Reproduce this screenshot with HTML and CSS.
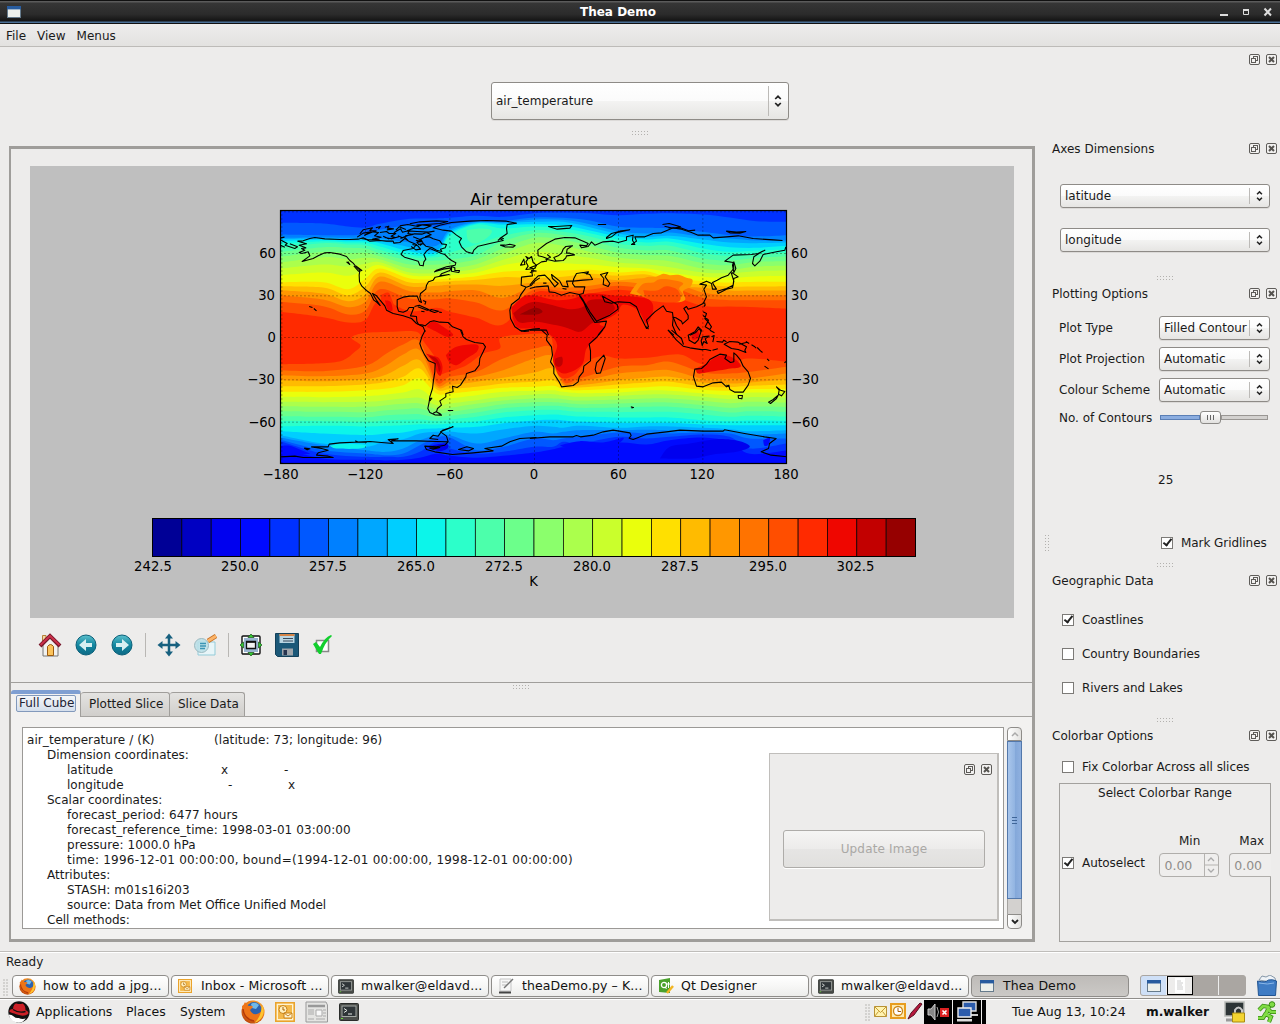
FILE: index.html
```html
<!DOCTYPE html>
<html lang="en">
<head>
<meta charset="utf-8">
<title>Thea Demo</title>
<link rel="stylesheet" href="styles.css">
</head>
<body>
<svg class="defs" width="0" height="0">
  <defs>
    <linearGradient id="teal" x1="0" y1="0" x2="0" y2="1"><stop offset="0" stop-color="#5cc0cc"/><stop offset=".5" stop-color="#1287a0"/><stop offset="1" stop-color="#0e6a86"/></linearGradient>
    <radialGradient id="fox" cx=".6" cy=".35" r=".7"><stop offset="0" stop-color="#ffd24a"/><stop offset=".6" stop-color="#ee7d18"/><stop offset="1" stop-color="#b8420c"/></radialGradient>
    <symbol id="float" viewBox="0 0 11 11"><rect x=".5" y=".5" width="10" height="10" rx="1.5" fill="#f2f1f0" stroke="#5e5c59"/><rect x="4.5" y="2.5" width="4" height="4" fill="none" stroke="#5e5c59"/><rect x="2.5" y="4.5" width="4" height="4" fill="#f2f1f0" stroke="#5e5c59"/></symbol>
    <symbol id="close" viewBox="0 0 11 11"><rect x=".5" y=".5" width="10" height="10" rx="1.5" fill="#f2f1f0" stroke="#5e5c59"/><path d="M3 3l5 5M8 3l-5 5" stroke="#55534f" stroke-width="2"/></symbol>
    <symbol id="updown" viewBox="0 0 8 12"><path d="M1.2 4L4 1.3 6.8 4M1.2 8L4 10.7 6.8 8" fill="none" stroke="#222" stroke-width="1.7"/></symbol>
    <symbol id="firefox" viewBox="0 0 24 24"><circle cx="12" cy="12" r="11.5" fill="url(#fox)"/><circle cx="13" cy="9.5" r="7.5" fill="#2d62ae"/><path d="M10 4q4-3 8 1l-3 4-4-1z" fill="#70b9e8"/><path d="M1 6q2-1 3-4 1 3 4 4 3-1 4 1l-3 3q2 5 7 4 4-1 5-5 3 5-2 10-8 5-14-1-4-5-4-12z" fill="#ee7417"/><path d="M21 5q3 5 1 10-2 6-9 8 7-5 8-18z" fill="#ffc52f"/><path d="M2 9q1 10 11 12" stroke="#b43a0a" stroke-width="1.5" fill="none"/></symbol>
    <symbol id="outlook" viewBox="0 0 20 20"><rect x=".8" y=".8" width="18.4" height="18.4" fill="#fff3cf" stroke="#eaa32c" stroke-width="1.6"/><rect x="3" y="3" width="14" height="14" fill="#f4b94a"/><circle cx="8" cy="7.5" r="4" fill="#fff0bd" stroke="#c98218"/><path d="M8 5v3h2" stroke="#a86108" fill="none"/><path d="M9 11h8v5H9z" fill="#fff5d3" stroke="#c98218"/><path d="M9 11l4 3 4-3" fill="none" stroke="#c98218"/></symbol>
    <symbol id="term" viewBox="0 0 20 18"><rect x=".5" y=".5" width="19" height="17" rx="1" fill="#4b4e4b" stroke="#2a2c2a"/><rect x="3" y="3" width="14" height="10.5" fill="#2f3538" stroke="#a3a8a4"/><path d="M5 5.5l3 2-3 2M9 11h4" stroke="#e6eae6" fill="none"/><path d="M2 15.5h2" stroke="#6edb3a"/></symbol>
    <symbol id="win" viewBox="0 0 14 12"><rect x=".5" y=".5" width="13" height="11" fill="#edf0ec" stroke="#667b8c"/><path d="M0 0h14v3.4H0z" fill="#285c9f"/></symbol>
  </defs>
</svg>

<header class="titlebar">
  <svg width="14" height="12"><use href="#win"/></svg>
  <span class="title">Thea Demo</span>
  <svg class="winbtns" width="52" height="12" viewBox="0 0 52 12"><path d="M0 9h8" stroke="#ddd" stroke-width="2"/><path d="M23.500 4.500h5v4h-5z" fill="none" stroke="#ddd"/><path d="M23 4h6" stroke="#ddd" stroke-width="2"/><path d="M44.500 2.500l6.500 7M51 2.500l-6.500 7" stroke="#ddd" stroke-width="2"/></svg>
</header>
<nav class="menubar"><span>File</span><span>View</span><span>Menus</span></nav>

<section class="topdock">
  <div class="dockbtns"><svg><use href="#float"/></svg><svg><use href="#close"/></svg></div>
  <div class="combo big"><span>air_temperature</span><svg class="ud"><use href="#updown"/></svg></div>
  <i class="grip"></i>
</section>

<main class="work">
  <section class="central">
    <div class="plotpane">
      <svg class="figure" width="984" height="452" viewBox="30 166 984 452">
        <rect x="30" y="166" width="984" height="452" fill="#bfbfbf"/>
        <text x="534" y="205" class="ptitle">Air temperature</text>
        <svg x="280.500" y="210.500" width="506" height="253" viewBox="32 76 1518 759">
          <g id="bands"></g>
          <g class="coast">
            <g>
              <path d="M32 180l13 6M32 158l12-2M34 165l18 10-6 5 29 10 8-5-23-9"/>
              <path d="M96 205l-8-3 17-7-10-5 13-2-20-8 22-4-26-8 16-1 20-7 15-3 30 4 45 2 30 0 25-1 15-4 20 10 30-2 20 2 20 0 2 6 18-2 15-12 15 10 20 8-10 12-30 6-6 12 10 8 21 6 20 6 5 12 10 2 2-12 6-8-6-14 8-10 10-8 20 8 15 7 10 3 10 10 10 8 13 7-2 7-26 5-30 10-6 5 26-8 25-4-5 8-25 10-5 6 28-4-42 8-6 9-14 5-6 10-2 12-16 13-2 10 5 17-7-4-6-15-22 0-20 3-18 8 0 21 4 13 14 3 12-5 6-9 14 0-7 18-3 7 18 2 1 14 5 10 14 2 6 2 14-12 12-3 18 4 25 1 13 13 27 10 5 15"/>
              <path d="M96 205l19-5 5 12-23 17 33-9 15-8 10-5 10-4 15-1 30 5 20 7 10 12 10 8 8 10 12 11-2 15 1 20 7 13 14 13 12 9 10 20 10 7 9 9-11-16-12-20 12 7 15 18 10 12 5 13 20 10 30 7 25 8 15 15 20 10 6 15"/>
              <path d="M230 230l10 8-6-9M252 242l14 16 10-2-18-14M118 364l10 3M132 370l8 7"/>
              <path d="M262 156l18-12 24-4-20 10 26-10 16 2-12 10 20 4-26 6 20 2-34-1-20-3M270 146l10-12 28-6-8 8 20 1M318 128l14-4-6 7M345 126l12-3-4 6 18 2-20 3M330 142l20-3 8 6 20 0-14 8 12 4-20 4-16-8M345 157l20 4 22-6M372 143l20-12 6 10 22-6-6 10 16 3-24 4M384 152l14 6 18-8M378 135l10-10 20 8M390 122l24-4 30 6 14-5 26 3-22 9-30-2-20 8 30 2 34 2 18-3M420 116l30-6 50-3 34 2-24 6-40 3-30 2M416 150l18-4 22 1 14-5 14 7-18 6M430 155l20 8 12-5 16-3 12 6 20 6 6 9 14 2-4 10-14 4 4 7-16-4-14-8-18-4-8-8-14 3-4-7 14-2-18-4M424 184l14 10 14-2-8-10-16-4M440 172l14-8 6 10-10 7M392 160l12-5 9 10"/>
              <path d="M490 128l20-8 35-8 55-4 50-2 60 2 30 6-28 4-2 12 2 15-22 15 10 6-40 9-35 8-13 12-4 10-18-5-15-15-7-15 7-10-15-10-15-12-25-3zM684 166l10-8 8 3M692 180l13 5 25 1 6-5-16-4-14 3z"/>
              <path d="M768 214l10 6 7-6 5 18 10 8-5 10-27 3 7-10-7-13 6-8zM752 240l10-18 3 16zM800 258l-15-2 3 16-33 4-1 24 16 6 15-6 10-12 15-10M768 306l-3 6-13 18-4 10-23 18-5 17 2 25 13 25 20 13 35-6 20-2"/>
              <path d="M434 364l14-4 30 14-6 1-28-10M480 377l4-4 22 5-12 4zM454 378l10 2M508 381l8 1M460 346l8 4-3 8M545 244l10 4 0 8 14 0-2 6-22-4z"/>
            </g>
            <g transform="translate(780 0)">
              <path d="M0 262l10-2 0-10-10-2 20-8 15-10 15-2 2-8-14-5-13-3-1-17 26-20 25-13 30-5 30 1 25 10 15 7-5 7-20-2 5 8 20-4 10-14 10 10 25-10 30-2 15 4 25-7 0-10 20-5-2 15 7 13-10 0 15-10-5-13 30 0 25-10 25-2 25-11 10-4 25 4 30 10 20 8 35 0 10 8 40-3 35-3 45 8 60 4 28 2"/>
              <path d="M230 157l15-12 25-7 30-4-40 9-15 12-15 5zM56 124l22 0 48-3-6 8-38 3zM204 118l25 0M398 118l20-3 34 10-22 4-26-6M416 128l40 1 20 8 20-2M590 138l30 3 28-2-18 5-30-1zM52 208l10 8-14 6 18 4 9 2 25-2 8-8 2-6 24-3-14-5-10 0 2-12 16-10-20 2-8 8-5 12-10 8-13 5 6 10"/>
              <path d="M768 185l-3 10-25 5-40 8-10 20-15 14-7-7 4-20 23-15 10-5-20 10-20 3-55 2-25 18 25 4 2 18-17 20-20 8-13 7-14 7 4 8 8 12-12 0-3-17-15-7-20 9 20 3-8 12 8 23-10 20-20 10-25 7-5-8-8 6 13 21 0 10-17 15-3-8-17-10-8-2 10 25 10 15"/>
              <path d="M612 230l6 20-6 12-4-22zM606 262l19 13-13 5-2 20-20 10-28 8 3 7 25-13 18-4 4-20-8-26M524 352l2 8-4 4"/>
              <path d="M216 332l14 8 15 8 17 10 3 14-25 18-40 18-20-28-20-35-12-17M148 330l14 22 10 23 13 22 10 15 35-4-5 17-20 25M218 334l7 16 20 4 20-4 35 2 20 13 10 25 20 40 6-5-6-20 25-25 25-18 10 16 18 4 2 18-2 20 12 28M350 424l6 8"/>
              <path d="M0 310l20-5 35-3 3 18 17 2 20 8 25-8 28 6 12-3 5-20-30 0-7-10 2-7 30-3 28-2-8-15-20-6-20 3-8 15-2 8-20 0 5 17-17-2-8-15-25-20 3 12 17 15-10 10-15-20-15-15-20 2-15 16-10 12M162 262l14-2-6 8M212 268l22-6-8 13 14 20-5 9-15-6 2-18zM0 435l14-1 36 1 6 15M40 294l10 0M98 310l12 2"/>
              <path d="M520 380l10 5-5 15 10 10 10 15-5 8-14-8 10-20-16-14M414 434l18 16M480 450l18-8 10-12 6 10"/>
            </g>
            <g transform="translate(0 435)">
              <path d="M466 0l-10 20-6 20 5 15 10 20 11 17 20 8-1 25-4 25-3 25-8 25-2 15-4 20 6 12 15 7 20 1-4-4-12-6-9 4M572 0l8 20 10 8 25 9 25 3 7 10-7 15-10 20-2 20-13 17-25 8-2 10-16 25-10 7-14-4 2 17-22 5 0 10-18 12 5 13-12 10-3 10 15 10M534 241l16 0M478 206l8-2-6 8M750 0l14 4 14-2"/>
              <path d="M32 380l43-2 25 4 90 0-15-4-35-3 5-7 30-8-20-5-30-5 50 0 3-8 32-4 90-4 70 6-15-12 30-2-20 6 75 0 60 2 35 1-5-17-18-13 38-15-32 10-13 18-15-3-10 10 25 3M104 354l16 2-8 3zM256 332l10 4 25 0M535 335l-10 10-25 5-35-2 5 10 25 7 53 8 62-5 60-6-25-7 50-7 25-13 30-10 50-3M480 354l30-2-20 5zM566 358l25-8 20 5-14 7z"/>
            </g>
            <g transform="translate(780 435)">
              <path d="M218 0l-18 22-22 20 4 20 0 30-20 16-2 17-12 15-3 15-15 11-35 4-7-15-16-25 0-20-10-15 6-20-3-25-15-20 2-15-17-15M222 75l4 10-14 43-12 2-4-12 4-20z"/>
              <path d="M515 115l-20 2-4 23 9 28 20 2 30-12 25-2 15 14 7-5 3 13 15 8 25 0 15-21 7-20-7-20-15-17-8-18-12-15-8-7 0 27-10 2-17-12 5-10-20-3-15 8-15 8-10 14zM625 196l13 0-2 10-10-2zM740 170l12 10 13 4-10 13-9-5 2-12zM745 195l-5 10-18 15-6-4 14-8zM590 164l6 6"/>
              <path d="M583 42l17-8 25 2 25 14-5 10 3 7-23-9-20-3zM628 42l24-6M648 34l10 6M665 44l10 6 4 4M682 52l10 10 6 5M712 86l6 6M704 108l12 8M764 98l4-4M415 0l25 30 20 18 20 5 40 6M425 0l30 25 6 18M475 15l20-10 10-15 10 10-10 30-10 10-17-10zM518 20l20-2-12 8 6 14-10-6-5 12-3-14zM508 58l20 0 16 4M548 60l16-4M545 20l8-4-4 20M560 34l18 2 4-6 8 5M540 0l14 8M303 230l8 2-6 1"/>
              <path d="M0 325l60-5 70 0 10-4 12 4 38-5 30-10 30-5 50 8 4 8-6 8 12 4 40-16 60-7 40-5 70 3 60 0 4-4 60 11 60 10 35 5-20 15-3 15-22 10 30 10 48 5"/>
            </g>
          </g>
          <path class="grid" d="M287 835V76M540 835V76M794 835V76M1046 835V76M1299 835V76M32 205H1549M32 332H1549M32 457H1549M32 584H1549M32 711H1549M32 80H1549M36 76V835"/>
        </svg>
        <rect x="280.500" y="210.500" width="506" height="253" fill="none" stroke="#000" stroke-width="1.200"/>
        <g class="tick end"><text x="276" y="258">60</text><text x="275" y="300">30</text><text x="276" y="342">0</text><text x="275" y="384">−30</text><text x="276" y="427">−60</text></g>
        <g class="tick start"><text x="791" y="258">60</text><text x="791" y="300">30</text><text x="791" y="342">0</text><text x="791" y="384">−30</text><text x="791" y="427">−60</text></g>
        <g class="tick"><text x="280.500" y="479">−180</text><text x="365" y="479">−120</text><text x="449.500" y="479">−60</text><text x="534" y="479">0</text><text x="618.500" y="479">60</text><text x="702" y="479">120</text><text x="786" y="479">180</text></g>
        <g id="colorbar"></g>
        <g class="tick"><text x="153" y="571">242.5</text><text x="240" y="571">250.0</text><text x="328" y="571">257.5</text><text x="416" y="571">265.0</text><text x="504" y="571">272.5</text><text x="592" y="571">280.0</text><text x="680" y="571">287.5</text><text x="768" y="571">295.0</text><text x="855.500" y="571">302.5</text><text x="533.500" y="586">K</text></g>
      </svg>
      <div class="tools">
        <svg width="24" height="24" viewBox="0 0 24 24"><path d="M5 12v11h15V12l-8-8z" fill="#f1f1ef" stroke="#777"/><path d="M4.500 8V2.500H8V6" fill="#f3d6a0" stroke="#b5803a"/><path d="M9.500 22.500v-9q3-4 6 0v9z" fill="#fbc35b" stroke="#9b5b11"/><path d="M2 13L12 3l10 10" fill="none" stroke="#751528" stroke-width="4"/><path d="M2.500 12L12 3l9.500 9" fill="none" stroke="#c9304a" stroke-width="2"/></svg>
        <svg width="24" height="24" viewBox="0 0 24 24"><circle cx="12" cy="12" r="10" fill="url(#teal)" stroke="#0b6079"/><path d="M5 12l7-6v4h6v4h-6v4z" fill="#d7f0f2"/></svg>
        <svg width="24" height="24" viewBox="0 0 24 24"><circle cx="12" cy="12" r="10" fill="url(#teal)" stroke="#0b6079"/><path d="M19 12l-7-6v4H6v4h6v4z" fill="#d7f0f2"/></svg>
        <i class="sep"></i>
        <svg width="24" height="24" viewBox="0 0 24 24"><path d="M12 4v16M4 12h16" stroke="#17607f" stroke-width="2.500"/><path d="M12 .5l4 5H8zM12 23.500l4-5H8zM.5 12l5-4v8zM23.500 12l-5-4v8z" fill="#17607f"/></svg>
        <svg width="24" height="24" viewBox="0 0 24 24"><path d="M5 9h17v13H5z" fill="#e8f5f8" stroke="#93cbd9"/><circle cx="8.500" cy="12.500" r="7" fill="#b8dfe7" fill-opacity=".85" stroke="#9cb9c0"/><path d="M7 10.500h6M7 13h6M7 15.500h5" stroke="#3b95b5" stroke-width="1.300"/><path d="M15 8l8-5" stroke="#c56e20" stroke-width="4.500"/><path d="M15 8l8-5" stroke="#fbb469" stroke-width="3"/></svg>
        <i class="sep"></i>
        <svg width="24" height="24" viewBox="0 0 24 24"><rect x="3" y="3" width="18" height="18" rx="1" fill="#fff" stroke="#111" stroke-width="1.400"/><path d="M5 5h14v14H5z" fill="#9ab5d1"/><path d="M7.500 8.500h9v7h-9z" fill="#f2f2f2" stroke="#111" stroke-width="1.300"/><path d="M8 9h8" stroke="#111" stroke-width="1.600"/><path d="M12 1l3 3.500H9zM12 23l3-3.500H9zM1 12l3.500-3v6zM23 12l-3.500-3v6z" fill="#36cf36" stroke="#174d17" stroke-width=".7"/></svg>
        <svg width="24" height="24" viewBox="0 0 24 24"><path d="M.5.500h23v23H2.500l-2-2z" fill="#1b5878" stroke="#134059"/><path d="M4.500 1h15v9h-15z" fill="#b9d5e2"/><path d="M4.500 1h15v2h-15z" fill="#d58447"/><path d="M8 5.500h10M8 8h10" stroke="#39495a"/><path d="M7 15.500h11v7H7z" fill="#9fa5ab"/><path d="M8.500 17h3.500v5H8.500z" fill="#26334e"/></svg>
        <svg width="24" height="24" viewBox="0 0 24 24"><path d="M5.500 7.500h12v11h-12z" fill="#fff" stroke="#888" stroke-width="1.500"/><path d="M2 11l3-2 4 5Q14 4 20 2l1 1Q14 9 10 21H8z" fill="#12cf2e"/></svg>
      </div>
    </div>
    <div class="splitter"><i class="grip"></i></div>
    <div class="tabs"><span class="tab on"><b>Full Cube</b></span><span class="tab t2">Plotted Slice</span><span class="tab t3">Slice Data</span></div>
    <div class="tabpane">
      <div class="textarea">
        <p class="w1"><span class="c0">air_temperature / (K)</span>(latitude: 73; longitude: 96)</p>
        <p class="i1">Dimension coordinates:</p>
        <p class="i2"><span class="c1">latitude</span><span class="c2">x</span>-</p>
        <p class="i2"><span class="c3">longitude</span><span class="c4">-</span>x</p>
        <p class="i1">Scalar coordinates:</p>
        <p class="i2 w1">forecast_period: 6477 hours</p>
        <p class="i2 w1">forecast_reference_time: 1998-03-01 03:00:00</p>
        <p class="i2 w1">pressure: 1000.0 hPa</p>
        <p class="i2 w2">time: 1996-12-01 00:00:00, bound=(1994-12-01 00:00:00, 1998-12-01 00:00:00)</p>
        <p class="i1">Attributes:</p>
        <p class="i2 w1">STASH: m01s16i203</p>
        <p class="i2">source: Data from Met Office Unified Model</p>
        <p class="i1">Cell methods:</p>
        <div class="update">
          <div class="dockbtns"><svg><use href="#float"/></svg><svg><use href="#close"/></svg></div>
          <div class="updbtn">Update Image</div>
        </div>
      </div>
      <div class="scroll">
        <div class="sbtn"><svg width="8" height="6"><path d="M1 5l3-3 3 3" fill="none" stroke="#aaa" stroke-width="1.500"/></svg></div>
        <div class="thumb"><i></i><i></i><i></i></div>
        <div class="trough"></div>
        <div class="sbtn dn"><svg width="8" height="6"><path d="M1 1l3 3 3-3" fill="none" stroke="#222" stroke-width="1.800"/></svg></div>
      </div>
    </div>
  </section>

  <aside class="side">
    <i class="vgrip"></i>
    <div class="dtitle"><span>Axes Dimensions</span><div class="dockbtns"><svg><use href="#float"/></svg><svg><use href="#close"/></svg></div></div>
    <div class="axes">
      <div class="combo"><span>latitude</span><svg class="ud"><use href="#updown"/></svg></div>
      <div class="combo"><span>longitude</span><svg class="ud"><use href="#updown"/></svg></div>
    </div>
    <i class="grip g1"></i>
    <div class="dtitle"><span>Plotting Options</span><div class="dockbtns"><svg><use href="#float"/></svg><svg><use href="#close"/></svg></div></div>
    <div class="form">
      <label>Plot Type</label><div class="combo"><span>Filled Contour</span><svg class="ud"><use href="#updown"/></svg></div>
      <label>Plot Projection</label><div class="combo"><span>Automatic</span><svg class="ud"><use href="#updown"/></svg></div>
      <label>Colour Scheme</label><div class="combo"><span>Automatic</span><svg class="ud"><use href="#updown"/></svg></div>
      <label>No. of Contours</label><div class="slider"><i class="done"></i><i class="knob"><u></u><u></u><u></u></i><i class="rest"></i></div>
    </div>
    <div class="count">25</div>
    <div class="check mark"><i class="box on"></i>Mark Gridlines</div>
    <i class="grip g2"></i>
    <div class="dtitle"><span>Geographic Data</span><div class="dockbtns"><svg><use href="#float"/></svg><svg><use href="#close"/></svg></div></div>
    <div class="geo">
      <div class="check"><i class="box on"></i>Coastlines</div>
      <div class="check"><i class="box"></i>Country Boundaries</div>
      <div class="check"><i class="box"></i>Rivers and Lakes</div>
    </div>
    <i class="grip g3"></i>
    <div class="dtitle"><span>Colorbar Options</span><div class="dockbtns"><svg><use href="#float"/></svg><svg><use href="#close"/></svg></div></div>
    <div class="check fix"><i class="box"></i>Fix Colorbar Across all slices</div>
    <div class="range">
      <div class="rt">Select Colorbar Range</div>
      <div class="mm"><span>Min</span><span>Max</span></div>
      <div class="auto">
        <div class="check"><i class="box on"></i>Autoselect</div>
        <div class="spin">0.00<svg width="14" height="22" viewBox="0 0 14 22"><path d="M.5 0v22M0 11h14" stroke="#b5b3b0"/><path d="M4 7l3-3 3 3M4 15l3 3 3-3" fill="none" stroke="#aaa" stroke-width="1.300"/></svg></div>
        <div class="spin cut">0.00</div>
      </div>
    </div>
  </aside>
</main>

<div class="status">Ready</div>

<div class="taskbar">
  <i class="vdots"></i>
  <div class="task"><svg width="17" height="17"><use href="#firefox"/></svg>how to add a jpg...</div>
  <div class="task"><svg width="14" height="14"><use href="#outlook"/></svg><span class="ol">Inbox - Microsoft ...</span></div>
  <div class="task"><svg width="16" height="15"><use href="#term"/></svg>mwalker@eldavd...</div>
  <div class="task"><svg width="17" height="16" viewBox="0 0 17 16"><path d="M2 1h11v12H2z" fill="#f7f7f7" stroke="#c5c5c5"/><path d="M4 4h6M4 7h5" stroke="#bbb"/><path d="M6 10l9-9" stroke="#777" stroke-width="1.500"/><path d="M1 14.500h12" stroke="#444" stroke-width="2"/></svg>theaDemo.py – K...</div>
  <div class="task"><svg width="17" height="16" viewBox="0 0 17 16"><path d="M1 2l11-2v15L1 14z" fill="#4aa12c"/><circle cx="6" cy="7" r="2.600" fill="none" stroke="#fff" stroke-width="1.300"/><path d="M10.500 4v6M9 6h3M7 9l1.500 2" stroke="#fff"/><path d="M9 15l6-7" stroke="#f2b522" stroke-width="2.500"/></svg><span class="qt">Qt Designer</span></div>
  <div class="task"><svg width="16" height="15"><use href="#term"/></svg>mwalker@eldavd...</div>
  <div class="task active"><svg width="14" height="12"><use href="#win"/></svg><span class="ol">Thea Demo</span></div>
  <div class="pager"><div class="p1"><svg width="14" height="12"><use href="#win"/></svg></div><div class="p2"><svg width="10" height="15" viewBox="0 0 10 15"><path d="M0 0h10v15H0z" fill="#fff"/><path d="M2 3h4M2 5h6M2 7h5M2 9h6M2 11h6" stroke="#ccc"/></svg></div><div></div><div></div></div>
  <svg class="trash" width="20" height="21" viewBox="0 0 20 21"><path d="M2 5l3-4 4 1 4-2 5 3 1 5z" fill="#eef2f6" stroke="#8597a8"/><path d="M.5 6q8 2 11-1 4-1 8 1l-1 14.500h-17z" fill="#3f7cc4" stroke="#235592"/><path d="M2 8q9 2 15 0" stroke="#8cb8e8" fill="none"/></svg>
</div>

<footer class="panel">
  <svg class="hat" width="22" height="22" viewBox="0 0 22 22"><circle cx="11" cy="11" r="10.700" fill="#111"/><path d="M.8 13.500q3 0 5 2 2 2 5 1.500 3 1.500 7 .5-3 4.200-7 4.200-8.500 0-10-8.200z" fill="#fff"/><path d="M1.500 11q-.5-3 3.500-3 .5-5.500 3.500-5.500 3 1 6 0 3 1.500 3 6.500 4 2 2.500 4-4 3-11 .5-6-2-7.500-2.500z" fill="#cc2027"/><path d="M5 8.500q6 4 12.500 2" stroke="#111" stroke-width="1.400" fill="none"/></svg>
  <span class="m1">Applications</span><span class="m2">Places</span><span class="m3">System</span>
  <svg class="ff" width="24" height="24"><use href="#firefox"/></svg>
  <svg class="o2" width="20" height="20"><use href="#outlook"/></svg>
  <svg class="np" width="23" height="22" viewBox="0 0 23 22"><path d="M1 1h20l1.500 3v17H1z" fill="#e4e4e2" stroke="#999"/><path d="M3 5h17" stroke="#999" stroke-width="2.500"/><path d="M3 9h6M3 11h6M3 13h6M3 18h6M18 9h3M18 12h3M18 15h3M11 18h9" stroke="#aaa"/><path d="M11 9h6v6h-6z" fill="#f8f8f8" stroke="#aaa"/></svg>
  <svg class="tm" width="20" height="18"><use href="#term"/></svg>
  <i class="vdots tray"></i>
  <svg class="systray" width="112" height="24" viewBox="0 0 112 24"><path d="M.5 6.500h12v10H.5z" fill="#fff3b0" stroke="#b89235"/><path d="M.5 6.500l6 6 6-6M.5 16.500l4-5M12.500 16.500l-4-5" fill="none" stroke="#c59a35"/><rect x="17" y="4" width="14" height="14" fill="#fde9ae" stroke="#e89d1d" stroke-width="2"/><circle cx="24" cy="11" r="4.500" fill="#fff" stroke="#cc8516" stroke-width="1.300"/><path d="M24 8v3.500h3" stroke="#a3600a" fill="none"/><path d="M34 19l3-6 9-10 2 1-8 11z" fill="#b6173c" stroke="#561020"/><path d="M50 0h28v24H50zM79 0h28v24H79zM108 0h4v24h-4z" fill="#000"/><path d="M54 9h3l4-5v16l-4-5h-3z" fill="#888" stroke="#ccc"/><path d="M63 7q3 5 0 10" fill="none" stroke="#aaa"/><path d="M66 8h9v9h-9z" fill="#dc2222"/><path d="M68.500 10.500l4 4M72.500 10.500l-4 4" stroke="#fff" stroke-width="1.600"/><path d="M89 2h13v9H89z" fill="#2c5cac" stroke="#ddd" stroke-width="1.400"/><path d="M94 14h10v2h-10z" fill="#ccc"/><path d="M84 8h13v9H84z" fill="#2c5cac" stroke="#eee" stroke-width="1.400"/><path d="M83 19h15v2.500H83z" fill="#ddd"/></svg>
  <span class="clock">Tue Aug 13, 10:24</span>
  <span class="user">m.walker</span>
  <svg class="lock" width="22" height="22" viewBox="0 0 22 22"><path d="M1 1h19v14H1z" fill="#2d3436" stroke="#b9bbb8" stroke-width="1.500"/><path d="M2 19h10" stroke="#999" stroke-width="3"/><path d="M11 12V9q3.500-5 7 0v3" fill="none" stroke="#c9c9c9" stroke-width="2"/><path d="M8.500 12h12v9h-12z" fill="#f3d431" stroke="#a98b10"/></svg>
  <svg class="run" width="21" height="22" viewBox="0 0 21 22"><g fill="none" stroke="#378a12" stroke-width="4.200"><path d="M2 9l4-4 6 1-3 7 5 3-2 5M9 12l-3 5H1M11 8l3 3h5"/></g><g fill="none" stroke="#80dc45" stroke-width="2.600"><path d="M2 9l4-4 6 1-3 7 5 3-2 5M9 12l-3 5H1M11 8l3 3h5"/></g><circle cx="15" cy="3.500" r="2.800" fill="#80dc45" stroke="#378a12"/></svg>
</footer>
<script src="map.js"></script>
</body>
</html>
```
FILE: styles.css
```css
* { box-sizing: border-box; }
body { margin: 0; width: 1280px; height: 1024px; overflow: hidden; background: #edeceb; font: 12px/16px "DejaVu Sans", sans-serif; color: #1a1a1a; display: flex; flex-direction: column; }
svg { display: block; flex: none; }
i, u { display: block; font-style: normal; text-decoration: none; }
.defs { position: absolute; }

.titlebar { height: 24px; flex: none; display: flex; align-items: center; padding: 0 8px 0 7px; background: linear-gradient(#111 0, #111 1px, #5b5b5b 1px, #5b5b5b 2px, #363636 3px, #2b2b2b 60%, #141414 21px, #4a6f96 22px, #4a6f96 23px, #101010 23px); color: #fff; }
.title { flex: 1; text-align: center; font-weight: bold; }
.winbtns { margin-left: 5px; }
.menubar { height: 23px; flex: none; padding: 1px 0 0 6px; display: flex; gap: 11px; align-items: center; background: linear-gradient(#eeedec, #e3e2e0); border-bottom: 1px solid #bdbbb8; }

.topdock { height: 93px; flex: none; display: flex; flex-direction: column; align-items: center; padding-top: 7px; }
.topdock .dockbtns { align-self: flex-end; margin-right: 3px; }
.topdock .grip { margin-top: 11px; }
.dockbtns { display: flex; gap: 6px; }
.dockbtns svg { width: 11px; height: 11px; }
.grip { width: 17px; height: 5px; background: repeating-linear-gradient(90deg, #b3b1ae 0 1px, transparent 1px 3px) 0 0 / 17px 1px no-repeat, repeating-linear-gradient(90deg, #b3b1ae 0 1px, transparent 1px 3px) 0 3px / 17px 1px no-repeat; }
.combo { height: 24px; border: 1px solid #8e8b87; border-radius: 3px; background: linear-gradient(#fff 0, #fbfbfb 50%, #f3f3f2 51%, #e6e5e3); box-shadow: 0 1px 0 #dcdad8; display: flex; align-items: center; padding-left: 4px; white-space: nowrap; }
.combo span { flex: 1; }
.combo .ud { width: 20px; height: 16px; padding: 2px 6px; border-left: 1px solid #bcbab7; }
.combo.big { width: 298px; height: 38px; margin-top: 17px; }
.combo.big .ud { height: 30px; padding: 9px 6px 9px 5px; }

.work { height: 811px; flex: none; display: flex; }
.central { width: 1026px; height: 796px; margin: 6px 0 0 9px; border: 3px solid #9f9d9a; border-left-width: 2px; display: flex; flex-direction: column; flex: none; }
.plotpane { height: 534px; padding: 17px 0 0 19px; border-bottom: 1px solid #a09e9b; flex: none; }
.figure { font-family: "DejaVu Sans", sans-serif; }
.ptitle { font-size: 16px; text-anchor: middle; fill: #000; }
.tick { font-size: 13.200px; text-anchor: middle; fill: #000; }
.tick.end { text-anchor: end; }
.tick.start { text-anchor: start; }
.coast { fill: none; stroke: #000; stroke-width: 3.300; stroke-linejoin: round; }
.grid { fill: none; stroke: #000; stroke-width: 2.700; stroke-opacity: .7; stroke-dasharray: 3 9; }
.tools { height: 53px; display: flex; align-items: center; padding-left: 8px; gap: 12px; }
.sep { width: 1px; height: 24px; background: #b9b7b4; margin: 0 -1px 0 -1px; }
.sep + svg { margin-left: -.5px; }

.splitter { height: 7px; flex: none; display: flex; justify-content: center; padding-top: 2px; }
.tabs { height: 27px; flex: none; display: flex; align-items: flex-end; border-bottom: 1px solid #a5a3a0; }
.tab { height: 24px; border: 1px solid #a09e9b; border-bottom: 0; border-left: 0; border-radius: 3px 3px 0 0; background: linear-gradient(#e4e3e1, #d0cecb); line-height: 22px; padding-left: 8px; }
.tab b { display: block; font-weight: normal; height: 17px; line-height: 15px; border: 1px solid #8299bb; border-radius: 2px; background: linear-gradient(#f4f6f9, #d5dfec); width: 60px; padding-left: 2px; white-space: nowrap; color: #223; }
.tab.on { height: 27px; width: 70px; margin: 0 0 -1px; padding: 1px 0 0 5px; background: #f2f1f0; border-top: 4px solid #7f9fd2; }
.tab.t2 { width: 89px; }
.tab.t3 { width: 75px; }
.tabpane { flex: 1; background: #f2f1f0; display: flex; padding: 10px 10px 10px 11px; gap: 3px; min-height: 0; }
.textarea { width: 982px; height: 202px; border: 1px solid #9b9996; background: #fff; padding: 5px 0 0 4px; position: relative; overflow: hidden; flex: none; }
.textarea p { margin: 0; height: 15px; line-height: 15px; white-space: nowrap; }
.textarea p span { display: inline-block; }
.textarea .i1 { padding-left: 20px; }
.textarea .i2 { padding-left: 40px; }
.w1 { letter-spacing: .08px; }
.w2 { letter-spacing: .214px; }
.c0 { width: 187px; } .c1 { width: 154px; } .c2 { width: 63px; } .c3 { width: 161px; } .c4 { width: 60px; }
.update { position: absolute; left: 746px; top: 25px; width: 230px; height: 168px; background: #edeceb; border: 1px solid #c0bebb; border-right-width: 2px; border-bottom-width: 2px; padding: 10px 5px 0 13px; display: flex; flex-direction: column; }
.update .dockbtns { align-self: flex-end; }
.updbtn { margin-top: 55px; width: 202px; height: 38px; border: 1px solid #aeaca9; border-radius: 3px; background: linear-gradient(#f5f5f4, #ecebea 50%, #e6e5e4 51%, #e1e0de); box-shadow: 0 1px 0 #fff; text-align: center; line-height: 36px; color: #aaa8a5; letter-spacing: .15px; }
.scroll { width: 15px; height: 202px; display: flex; flex-direction: column; flex: none; }
.sbtn { height: 14px; border: 1px solid #8e8c89; border-radius: 4px 4px 0 0; background: linear-gradient(90deg, #fff, #e3e2e0); display: flex; align-items: center; justify-content: center; }
.sbtn.dn { border-radius: 0 0 4px 4px; height: 15px; }
.thumb { height: 158px; border: 1px solid #5378ab; background: linear-gradient(90deg, #a9c6eb, #93b5e2 50%, #82a7d9 51%, #8fb0df); display: flex; flex-direction: column; align-items: center; justify-content: center; gap: 2px; }
.thumb i { width: 5px; height: 1px; background: #3f6598; }
.trough { flex: 1; background: #d3d1cf; border: 1px solid #a5a3a0; border-width: 0 1px; }

.side { flex: 1; position: relative; padding-left: 17px; }
.vgrip { position: absolute; left: 10px; top: 395px; width: 5px; height: 17px; background: repeating-linear-gradient(#b3b1ae 0 1px, transparent 1px 3px) 0 0 / 1px 17px no-repeat, repeating-linear-gradient(#b3b1ae 0 1px, transparent 1px 3px) 3px 0 / 1px 17px no-repeat; }
.dtitle { height: 17px; display: flex; justify-content: space-between; align-items: center; padding-right: 3px; }
.axes { margin: 27px 10px 0 8px; display: flex; flex-direction: column; gap: 20px; }
.side .grip { margin-left: 105px; margin-bottom: 4px; }
.g1 { margin-top: 24px; } .g2 { margin-top: 12px; } .g3 { margin-top: 22px; }
.form { margin: 14px 10px 0 7px; display: grid; grid-template-columns: 100px 111px; grid-template-rows: 24px 24px 24px 17px; row-gap: 7px; align-items: center; white-space: nowrap; }
.slider { display: flex; align-items: center; height: 17px; padding: 0 2px 0 1px; }
.done { width: 40px; height: 5px; background: #8bade0; border: 1px solid #5b7fb5; }
.knob { width: 21px; height: 13px; border: 1px solid #8c8a87; border-radius: 3px; background: linear-gradient(#fff, #e2e1df); display: flex; gap: 2px; justify-content: center; align-items: center; }
.knob u { width: 1px; height: 5px; background: #666; }
.rest { flex: 1; height: 5px; background: #d3d1cf; border: 1px solid #999693; }
.count { margin: 46px 0 0 106px; height: 16px; }
.check { height: 16px; display: flex; align-items: center; gap: 8px; white-space: nowrap; letter-spacing: -.06px; }
.box { width: 12px; height: 12px; border: 1px solid #7c7a77; background: #fff; position: relative; }
.box.on::after { content: ""; position: absolute; left: 3px; top: -1px; width: 3px; height: 7px; border: solid #222; border-width: 0 2px 2px 0; transform: rotate(38deg); }
.mark { margin: 47px 0 0 109px; }
.geo { margin: 23px 0 0 10px; display: flex; flex-direction: column; gap: 18px; }
.fix { margin: 15px 0 0 10px; }
.range { margin: 8px 0 0 7px; width: 212px; height: 159px; border: 1px solid #a3a19e; }
.rt { text-align: center; margin-top: 1px; height: 16px; }
.mm { display: flex; margin: 32px 0 0 119px; gap: 39px; height: 16px; }
.auto { display: flex; margin-top: 4px; margin-left: 2px; height: 24px; }
.auto .check { width: 98px; height: 19px; }
.spin { width: 60px; height: 24px; border: 1px solid #b0aeab; border-radius: 4px; line-height: 24px; padding-left: 4px; color: #8f8d8a; display: flex; justify-content: space-between; font-size: 12.500px; background: #efeeed; }
.spin.cut { width: 42px; margin-left: 10px; margin-right: -1px; border-right: 0; border-radius: 4px 0 0 4px; }

.status { height: 23px; flex: none; border-top: 1px solid #bfbdba; box-shadow: inset 0 1px #fff; padding: 2px 6px 0; }
.taskbar { height: 25px; flex: none; display: flex; padding: 1px 0 0 3px; border-bottom: 1px solid #8f8d8a; border-top: 0; }
.vdots { width: 6px; height: 17px; margin-top: 4px; background: radial-gradient(circle at 1px 1px, #b5b3b0 .6px, transparent .8px) 0 0 / 3px 3px; }
.vdots + .task { margin-left: 3px; width: 157px; }
.task { width: 158px; height: 22px; margin-right: 2px; flex: none; border: 1px solid #8f8d8a; border-radius: 4px; background: linear-gradient(#fff, #f7f7f6 50%, #ededeb); display: flex; align-items: center; gap: 7px; padding-left: 6px; font-size: 12.500px; white-space: nowrap; color: #111; letter-spacing: .1px; }
.ol { margin-left: 2px; }
.qt { margin-left: -1px; }
.task.active { background: linear-gradient(#bebbb8, #cbc9c6); padding-left: 8px; }
.pager { margin-left: 9px; width: 106px; height: 21px; display: flex; border-radius: 3px; overflow: hidden; background: #aaa6a2; border: 1px solid #aaa6a2; }
.pager div { width: 26px; display: flex; align-items: center; justify-content: center; border-right: 1px solid #eee; }
.pager div:last-child { border-right: 0; }
.pager .p1 { background: #cfe0f7; }
.pager .p2 { background: #edeceb; border: 1px solid #000; }
.trash { margin-left: 11px; }
.panel { height: 25px; flex: none; display: flex; align-items: center; border-top: 1px solid #fff; padding-left: 8px; font-size: 12.500px; color: #111; white-space: nowrap; }
.m1 { width: 90px; margin-left: 6px; }
.m2 { width: 54px; }
.m3 { width: 61px; font-size: 12.200px; }
.o2 { margin-left: 10px; } .np { margin-left: 10px; } .tm { margin-left: 11px; }
.tray { margin: 0 0 0 506px; }
.systray { margin-left: 3px; }
.clock { width: 134px; margin-left: 26px; font-size: 12.500px; }
.user { width: 78px; font-weight: bold; font-size: 12.200px; }
.run { margin-left: 11px; }
```
FILE: map.js
```javascript
// Filled contour levels, coldest to warmest.
var COLORS = ['#000096', '#0000c2', '#0000ef', '#000aff', '#0031ff', '#0058ff', '#0080ff', '#00a7ff', '#00ceff', '#0cf5ea', '#2cffca', '#4cffab', '#6cff8b', '#8bff6c', '#abff4c', '#caff2c', '#eaff0c', '#ffe000', '#ffbb00', '#ff9700', '#ff7300', '#ff4e00', '#ff2a00', '#ef0600', '#c20000', '#960000'];
var NX = [32, 160, 235, 287, 330, 420, 500, 540, 620, 700, 794, 880, 960, 1046, 1130, 1200, 1299, 1380, 1460, 1549];
var NORTH = {
  4: [60, 60, 60, 60, 60, 60, 60, 60, 60, 60, 60, 60, 60, 60, 60, 60, 60, 60, 60, 60],
  5: [113, 115, 124, 127, 116, 101, 100, 98, 92, 95, 84, 82, 84, 90, 86, 84, 88, 97, 108, 110],
  6: [148, 150, 150, 147, 134, 120, 125, 118, 106, 107, 97, 98, 106, 125, 128, 130, 140, 150, 154, 150],
  7: [158, 157, 158, 158, 160, 172, 182, 134, 110, 111, 103, 104, 117, 138, 145, 142, 155, 160, 166, 166],
  8: [162, 160, 162, 161, 166, 186, 196, 140, 113, 114, 110, 110, 126, 146, 155, 152, 163, 172, 174, 172],
  9: [168, 164, 167, 167, 174, 198, 203, 146, 115, 119, 117, 120, 136, 154, 163, 160, 176, 186, 188, 182],
  10: [175, 168, 172, 173, 184, 208, 209, 152, 118, 130, 124, 130, 144, 163, 172, 170, 190, 200, 196, 193],
  11: [186, 174, 178, 180, 194, 216, 216, 203, 178, 152, 135, 140, 154, 176, 182, 182, 204, 212, 206, 203],
  12: [200, 186, 188, 190, 204, 226, 226, 222, 210, 168, 144, 150, 166, 188, 196, 196, 220, 226, 218, 213],
  13: [215, 200, 204, 203, 213, 238, 238, 236, 222, 190, 158, 164, 182, 203, 210, 212, 234, 240, 230, 228],
  14: [232, 216, 222, 218, 222, 250, 252, 250, 237, 206, 174, 182, 200, 218, 224, 228, 250, 254, 244, 242],
  15: [250, 238, 244, 236, 231, 262, 264, 262, 250, 224, 200, 208, 218, 232, 238, 246, 262, 264, 258, 256],
  16: [270, 262, 272, 254, 240, 270, 272, 270, 262, 240, 228, 234, 238, 246, 250, 262, 275, 278, 274, 272],
  17: [291, 291, 312, 280, 250, 280, 282, 280, 273, 260, 256, 256, 254, 262, 258, 278, 288, 292, 290, 290],
  18: [303, 307, 330, 304, 262, 292, 290, 288, 284, 276, 278, 275, 266, 272, 268, 290, 298, 304, 304, 303],
  19: [315, 325, 348, 328, 274, 304, 302, 299, 298, 302, 292, 290, 277, 285, 280, 302, 308, 316, 316, 316],
  20: [330, 343, 366, 350, 290, 318, 322, 318, 316, 338, 303, 308, 302, 290, 296, 290, 322, 330, 330, 330],
  21: [350, 363, 388, 376, 312, 340, 342, 340, 352, 375, 313, 318, 314, 302, 310, 305, 338, 345, 345, 345],
  22: [380, 396, 412, 404, 345, 378, 368, 380, 398, 418, 323, 330, 325, 314, 324, 330, 362, 364, 366, 370]
};
var SX = [32, 160, 287, 350, 400, 450, 500, 540, 620, 700, 794, 850, 880, 930, 1046, 1130, 1200, 1299, 1380, 1440, 1549];
var SOUTH = {
  4: [788, 820, 824, 826, 824, 818, 806, 812, 818, 812, 802, 792, 786, 788, 772, 778, 765, 757, 770, 806, 796],
  5: [768, 805, 815, 815, 815, 800, 770, 790, 805, 800, 785, 785, 770, 775, 755, 760, 755, 748, 755, 790, 775],
  6: [764, 795, 805, 810, 805, 780, 757, 757, 795, 785, 760, 765, 760, 755, 742, 745, 745, 742, 745, 760, 760],
  7: [757, 780, 795, 800, 790, 765, 750, 750, 775, 760, 740, 745, 740, 735, 735, 734, 736, 735, 738, 748, 745],
  8: [750, 775, 785, 765, 762, 745, 740, 740, 745, 733, 722, 725, 728, 722, 728, 724, 724, 728, 732, 738, 735],
  9: [738, 745, 750, 745, 742, 732, 730, 728, 725, 714, 706, 704, 706, 710, 713, 713, 713, 718, 720, 720, 720],
  10: [724, 722, 724, 722, 720, 717, 718, 715, 709, 697, 690, 688, 690, 694, 697, 697, 697, 705, 708, 706, 707],
  11: [708, 708, 710, 706, 704, 703, 707, 703, 695, 682, 675, 674, 676, 680, 681, 680, 680, 688, 695, 692, 694],
  12: [693, 695, 696, 690, 688, 687, 697, 692, 682, 669, 663, 662, 664, 668, 667, 665, 665, 673, 682, 678, 680],
  13: [678, 680, 681, 675, 672, 670, 685, 680, 669, 657, 651, 651, 653, 657, 655, 652, 652, 660, 668, 664, 666],
  14: [663, 665, 665, 660, 656, 655, 672, 668, 656, 646, 640, 640, 642, 646, 643, 640, 640, 647, 654, 650, 652],
  15: [650, 651, 650, 645, 640, 638, 660, 655, 645, 635, 628, 627, 631, 635, 632, 628, 628, 635, 642, 636, 638],
  16: [635, 636, 633, 628, 622, 612, 645, 640, 630, 620, 617, 615, 620, 624, 622, 616, 617, 625, 630, 622, 625],
  17: [620, 620, 615, 610, 600, 580, 625, 625, 617, 608, 605, 602, 612, 615, 610, 606, 604, 614, 617, 612, 612],
  18: [603, 603, 598, 590, 575, 550, 612, 612, 605, 595, 590, 585, 605, 607, 598, 592, 590, 604, 606, 602, 598],
  19: [585, 588, 582, 568, 542, 525, 605, 600, 590, 578, 562, 550, 600, 600, 585, 578, 575, 592, 595, 592, 582],
  20: [570, 573, 565, 540, 508, 495, 598, 590, 575, 555, 520, 515, 595, 590, 565, 558, 555, 580, 580, 580, 565],
  21: [555, 558, 542, 505, 478, 470, 590, 575, 560, 520, 490, 490, 588, 580, 545, 540, 530, 562, 565, 560, 545]
};
var S22 = [[32, 537], [160, 534], [220, 525], [255, 500], [272, 480], [245, 458], [280, 444], [370, 440], [440, 440], [462, 470], [497, 520], [505, 565], [530, 562], [590, 540], [640, 505], [690, 490], [692, 458], [760, 448], [840, 452], [850, 520], [870, 575], [910, 572], [950, 530], [1000, 512], [1046, 520], [1130, 518], [1230, 508], [1290, 535], [1380, 545], [1430, 520], [1549, 530]];
// Closed warm and cold cells inside the zonal bands.
var CELLS = [
  [2, [[1170, 820], [1200, 785], [1260, 775], [1340, 762], [1410, 768], [1440, 785], [1400, 800], [1330, 808], [1270, 820]]],
  [2, [[470, 785], [500, 778], [530, 775], [535, 788], [510, 798]]],
  [3, [[34, 782], [60, 782], [95, 795], [120, 806], [80, 806], [34, 800]]],
  [3, [[870, 780], [930, 768], [1000, 772], [1060, 758], [1040, 778], [980, 790], [900, 790]]],
  [3, [[1480, 765], [1500, 758], [1496, 778], [1484, 782]]],
  [9, [[180, 782], [220, 776], [287, 780], [270, 790], [200, 790]]],
  [11, [[590, 135], [630, 130], [665, 135], [655, 155], [620, 175], [595, 165]]],
  [19, [[1080, 325], [1105, 290], [1130, 276], [1160, 274], [1180, 266], [1200, 270], [1225, 269], [1250, 278], [1268, 284], [1262, 305], [1240, 318], [1245, 345], [1200, 350]]],
  [20, [[1100, 320], [1120, 296], [1150, 292], [1170, 282], [1210, 285], [1240, 294], [1228, 310], [1236, 335], [1150, 345]]],
  [21, [[1120, 315], [1160, 316], [1190, 303], [1225, 316], [1225, 350], [1140, 345]]],
  [22, [[335, 328], [355, 322], [365, 340], [375, 375], [355, 380], [335, 350]]],
  [23, [[345, 345], [362, 350], [368, 375], [354, 375]]],
  [23, [[470, 425], [490, 408], [520, 425], [550, 448], [530, 455], [500, 440]]],
  [23, [[528, 510], [560, 485], [620, 478], [622, 498], [590, 520], [560, 540], [538, 530]]],
  [23, [[468, 505], [490, 512], [508, 520], [518, 545], [512, 572], [500, 560], [494, 535]]],
  [24, [[475, 512], [500, 520], [512, 545], [508, 560], [500, 535]]],
  [23, [[724, 368], [760, 335], [794, 332], [860, 345], [910, 340], [960, 325], [1046, 332], [1095, 335], [1140, 345], [1150, 375], [1130, 415], [1105, 375], [1060, 358], [1040, 385], [990, 415], [1005, 428], [980, 460], [950, 490], [935, 540], [880, 565], [850, 530], [862, 480], [840, 448], [790, 430], [740, 425]]],
  [24, [[730, 385], [760, 362], [794, 350], [840, 358], [900, 372], [940, 365], [960, 345], [1010, 345], [1035, 370], [1000, 400], [965, 415], [930, 440], [880, 425], [800, 410], [750, 412]]],
  [24, [[856, 520], [876, 515], [878, 535], [868, 545], [856, 538]]],
  [25, [[750, 388], [794, 368], [818, 378], [800, 388]]],
  [23, [[1278, 550], [1310, 535], [1340, 515], [1370, 510], [1400, 525], [1412, 545], [1370, 552], [1320, 560], [1285, 565]]],
  [23, [[1265, 445], [1285, 438], [1286, 458], [1268, 463]]]
];

function curve(pts) {
  var d = '';
  for (var i = 0; i < pts.length - 1; i++) {
    var a = pts[Math.max(i - 1, 0)], b = pts[i], c = pts[i + 1], e = pts[Math.min(i + 2, pts.length - 1)];
    d += 'C' + [b[0] + (c[0] - a[0]) / 6, b[1] + (c[1] - a[1]) / 6, c[0] - (e[0] - b[0]) / 6, c[1] - (e[1] - b[1]) / 6, c[0], c[1]].map(function (v) { return v.toFixed(1); }).join(' ');
  }
  return d;
}
function zip(xs, ys) { return xs.map(function (x, i) { return [x, ys[i]]; }); }

var out = '<rect x="30" y="70" width="1525" height="770" fill="' + COLORS[3] + '"/>';
for (var k = 4; k <= 22; k++) {
  var n = zip(NX, NORTH[k]);
  var s = (k === 22 ? S22 : zip(SX, SOUTH[k])).slice().reverse();
  out += '<path fill="' + COLORS[k] + '" d="M' + n[0] + curve(n) + 'L' + s[0] + curve(s) + 'Z"/>';
}
CELLS.forEach(function (c) {
  var p = c[1].concat([c[1][0]]);
  out += '<path fill="' + COLORS[c[0]] + '" d="M' + p[0] + curve(p) + 'Z"/>';
});
document.getElementById('bands').innerHTML = out;

var step = 763 / 26, bar = '';
COLORS.forEach(function (c, i) {
  bar += '<rect x="' + (152.5 + i * step) + '" y="518.5" width="' + step + '" height="38" fill="' + c + '" stroke="#000" stroke-width=".7"/>';
});
document.getElementById('colorbar').innerHTML = bar + '<rect x="152.5" y="518.5" width="763" height="38" fill="none" stroke="#000"/>';
```
